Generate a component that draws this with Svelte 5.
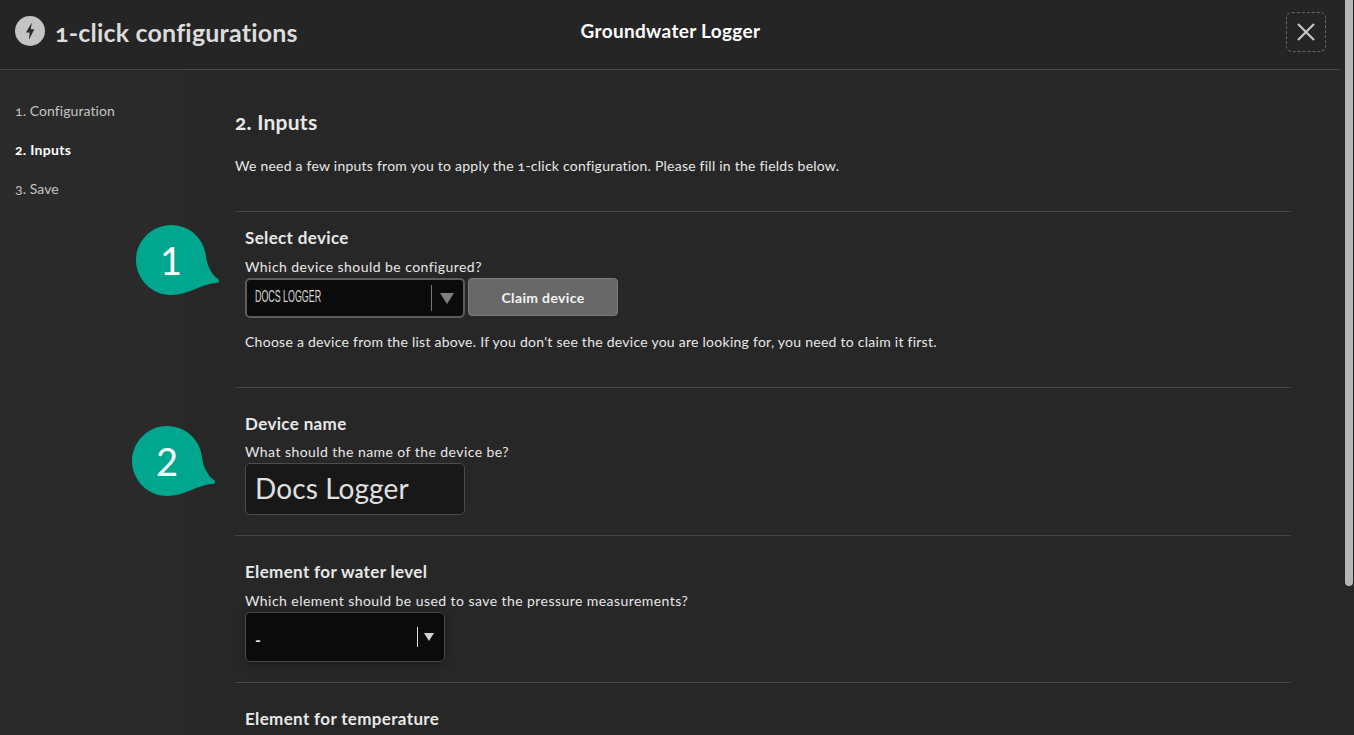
<script>
  const steps = [
    { label: '1. Configuration', active: false },
    { label: '2. Inputs', active: true },
    { label: '3. Save', active: false }
  ];
</script>

<div class="page">
  <div class="dialog">
    <header class="head">
      <div class="brand">
        <svg class="bolt" viewBox="0 0 30 30" width="30" height="30" aria-hidden="true">
          <circle cx="15" cy="15" r="15" fill="#c4c4c4" />
          <path d="M16.8 6.5 11 16.6h3.6L14 23.5l5.4-10.2h-3.6z" fill="#2b2b2b" />
        </svg>
        <span class="brand-text">1-click configurations</span>
      </div>
      <div class="head-title">Groundwater Logger</div>
      <button class="close" aria-label="Close">
        <svg viewBox="0 0 20 20" width="20" height="20" aria-hidden="true">
          <path d="M2 2 18 18M18 2 2 18" stroke="#c8c8c8" stroke-width="2.2" fill="none" />
        </svg>
      </button>
    </header>
    <div class="body">
      <nav class="side">
        {#each steps as s}
          <div class="step" class:active={s.active}>{s.label}</div>
        {/each}
      </nav>
      <main class="main">
        <h2>2. Inputs</h2>
        <p class="intro">We need a few inputs from you to apply the 1-click configuration. Please fill in the fields below.</p>

        <section class="sec sec1">
          <div class="bubble b1">
            <svg viewBox="0 0 84 72" width="84" height="72" aria-hidden="true">
              <path d="M35 0C54 0 68 14 70 31 71 41 76 50 82 54 84 56 83 58 80 58 68 58 52 70 35 70 16 70 0 54 0 35 0 16 16 0 35 0Z" fill="#00a78e" />
            </svg>
            <span>1</span>
          </div>
          <h3>Select device</h3>
          <label class="q" for="dev">Which device should be configured?</label>
          <div class="row">
            <div class="select big" id="dev">
              <span class="val narrow"><span class="squeeze">DOCS LOGGER</span></span>
              <i class="sep"></i>
              <i class="tri"></i>
            </div>
            <button class="claim">Claim device</button>
          </div>
          <p class="help">Choose a device from the list above. If you don't see the device you are looking for, you need to claim it first.</p>
        </section>

        <section class="sec sec2">
          <div class="bubble b2">
            <svg viewBox="0 0 84 72" width="84" height="72" aria-hidden="true">
              <path d="M35 0C54 0 68 14 70 31 71 41 76 50 82 54 84 56 83 58 80 58 68 58 52 70 35 70 16 70 0 54 0 35 0 16 16 0 35 0Z" fill="#00a78e" />
            </svg>
            <span>2</span>
          </div>
          <h3>Device name</h3>
          <label class="q" for="name">What should the name of the device be?</label>
          <div class="input" id="name">Docs Logger</div>
        </section>

        <section class="sec sec3">
          <h3>Element for water level</h3>
          <label class="q" for="el">Which element should be used to save the pressure measurements?</label>
          <div class="select small" id="el">
            <span class="val dash">-</span>
            <i class="sep"></i>
            <i class="tri"></i>
          </div>
        </section>

        <section class="sec sec4">
          <h3>Element for temperature</h3>
        </section>
      </main>
    </div>
  </div>
  <div class="scrollbar"><div class="thumb"></div></div>
</div>

<style>
  :global(body) { margin: 0; background: #272727; overflow: hidden; }
  .page {
    display: flex;
    width: 1354px;
    height: 735px;
    overflow: hidden;
    font-family: "Lato", "Open Sans", sans-serif;
    font-variant-numeric: oldstyle-nums;
    color: #e6e6e6;
  }
  .dialog { width: 1345px; display: flex; flex-direction: column; flex: none; background: #252525; }
  .scrollbar { width: 9px; flex: none; background: #272727; }
  .thumb { width: 8px; height: 586px; background: #b5b5b5; border-radius: 0 0 4px 4px; }

  .head {
    height: 70px;
    box-sizing: border-box;
    margin-right: 5px;
    border-bottom: 1px solid #484848;
    display: grid;
    grid-template-columns: 1fr auto 1fr;
    align-items: center;
    padding: 0 14px 8px 15px;
    flex: none;
  }
  .brand { display: flex; align-items: center; gap: 10px; }
  .brand-text { font-size: 25px; font-weight: 700; color: #dcdcdc; margin-top: 2px; letter-spacing: .2px; }
  .head-title { font-size: 19px; font-weight: 700; color: #fff; letter-spacing: .32px; }
  .close {
    justify-self: end;
    width: 40px;
    height: 40px;
    border: 1px dashed #666;
    border-radius: 6px;
    background: none;
    padding: 0;
    display: flex;
    align-items: center;
    justify-content: center;
    margin-top: 3px;
  }

  .body { flex: 1; display: flex; min-height: 0; }
  .side { width: 185px; flex: none; background: #2a2a2a; padding: 31px 0 0 15px; box-sizing: border-box; }
  .step { height: 39px; line-height: 20px; font-size: 14px; color: #c4c4c4; letter-spacing: .08px; }
  .step.active { color: #fff; font-weight: 700; letter-spacing: .3px; }

  .main { flex: 1; background: #272727; padding: 0 54px 0 50px; min-width: 0; }
  h2 { margin: 39px 0 0; font-size: 21px; line-height: 26px; font-weight: 700; color: #e8e8e8; letter-spacing: .25px; }
  .intro { margin: 22px 0 0; font-size: 14px; line-height: 18px; color: #e8e8e8; height: 45px; letter-spacing: .235px; }
  .sec { position: relative; border-top: 1px solid #454545; padding-left: 10px; box-sizing: border-box; }
  .sec1 { margin-top: 9px; height: 176px; }
  .sec2 { height: 148px; }
  .sec3 { height: 147px; }
  h3 { margin: 0; font-size: 17px; line-height: 20px; font-weight: 700; color: #e8e8e8; padding-top: 16px; letter-spacing: .35px; }
  .q { display: block; font-size: 14px; line-height: 18px; color: #e8e8e8; margin-top: 10px; letter-spacing: .44px; }
  .sec2 h3 { padding-top: 26px; }
  .sec3 h3 { padding-top: 26px; }
  .sec4 h3 { padding-top: 26px; }
  .sec2 .q { margin-top: 9px; }

  .row { display: flex; gap: 3px; margin-top: 2px; }
  .select {
    display: flex;
    align-items: center;
    box-sizing: border-box;
    background: #0b0b0b;
    border-radius: 5px;
  }
  .select.big { width: 220px; height: 40px; border: 2px solid #5c5c5c; padding: 0 9px 0 8px; }
  .select.small {
    width: 200px; height: 50px; border: 1px solid #484848; margin-top: 2px; padding: 0 10px 0 9px;
    box-shadow: 0 2px 8px rgba(0,0,0,.3);
  }
  .val { flex: 1; }
  .narrow { font-family: "Liberation Sans", sans-serif; font-size: 17px; color: #d8d8d8; margin-top: -2px; }
  .squeeze { display: inline-block; transform: scaleX(.522); transform-origin: left center; white-space: nowrap; }
  .dash { font-size: 16px; color: #eee; font-weight: 700; padding-top: 4px; }
  .sep { width: 1px; background: #777; height: 26px; margin-right: 8px; }
  .small .sep { background: #ddd; height: 20px; margin-right: 6px; }
  .tri { width: 0; height: 0; border-left: 7px solid transparent; border-right: 7px solid transparent; border-top: 11px solid #808080; }
  .small .tri { border-left-width: 5px; border-right-width: 5px; border-top: 8px solid #d0d0d0; }
  .claim {
    width: 150px;
    height: 38px;
    border: 1px solid #7c7c7c;
    border-radius: 4px;
    background: #686868;
    color: #f4f4f4;
    font: 700 14px "Lato", sans-serif;
    letter-spacing: .35px;
  }
  .help { margin: 15px 0 0; font-size: 14px; line-height: 18px; color: #e8e8e8; letter-spacing: .26px; }
  .input {
    width: 220px;
    height: 52px;
    box-sizing: border-box;
    border: 1px solid #4c4c4c;
    border-radius: 5px;
    background: #181818;
    margin-top: 2px;
    padding: 0 10px 0 9px;
    font-size: 28px;
    font-weight: 400;
    line-height: 48px;
    color: #e0e0e0;
    letter-spacing: .1px;
    font-variant-numeric: normal;
  }

  .bubble { position: absolute; width: 84px; height: 72px; }
  .bubble svg { display: block; }
  .bubble span {
    position: absolute;
    left: 0;
    width: 70px;
    top: 12px;
    text-align: center;
    font-size: 38px;
    line-height: 46px;
    color: #fff;
    font-variant-numeric: lining-nums;
  }
  .b1 { left: -99px; top: 13px; }
  .b2 { left: -103px; top: 38px; }
</style>
